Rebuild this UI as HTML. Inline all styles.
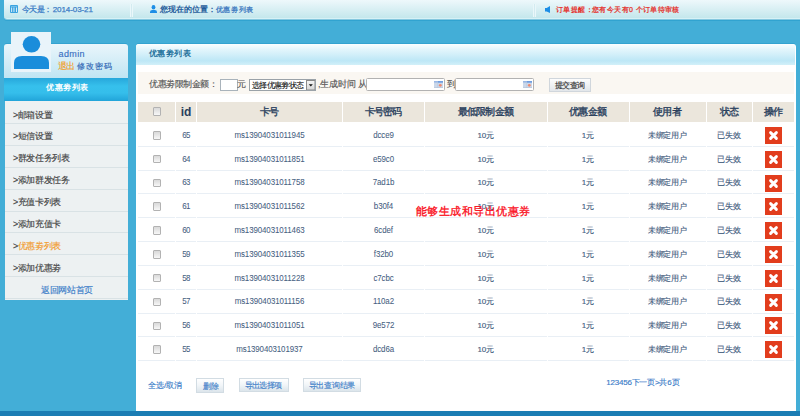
<!DOCTYPE html>
<html><head><meta charset="utf-8">
<style>
*{margin:0;padding:0;box-sizing:border-box}
html,body{width:800px;height:416px;overflow:hidden}
body{background:#43aed7;font-family:"Liberation Sans",sans-serif;position:relative}
.abs{position:absolute}
.t{position:absolute;white-space:nowrap;line-height:1;transform-origin:0 0;-webkit-text-stroke:0.15px currentColor}
.ct{position:absolute;text-align:center;white-space:nowrap;-webkit-text-stroke:0.15px currentColor}
.ct span{display:inline-block;transform-origin:50% 50%}
#top{left:4px;top:0;width:796px;height:19px;border-radius:0 0 0 3px;background:linear-gradient(#eef8fb,#c4e7ec);border-bottom:1px solid #d6f1f6;box-shadow:0 1px 0 #86c8df,0 2px 0 #31a3d0}
#bstrip{left:0;top:411px;width:800px;height:5px;background:#1b7db4}
.sep{position:absolute;top:4px;width:3px;height:13px;background:#d3ebf0;border-left:1px solid #eaf7fa;border-right:1px solid #eaf7fa}
#user{left:4px;top:44px;width:124px;height:34px;border-radius:3px 3px 0 0;background:linear-gradient(#eaf6fb,#bfe5f3)}
#avatar{left:11px;top:32px;width:40px;height:40px;background:#e9f4fa;overflow:hidden}
#shead{left:4px;top:77.8px;width:124px;height:23px;background:linear-gradient(#27a7db,#36c0ec 35%,#35beeb 65%,#21a4d9)}
#menu{left:5px;top:101.2px;width:123px;height:198.6px;background:#edf1f2}
.ml{position:absolute;left:5px;width:123px;height:1px;background:#d9e2e5}
#main{left:136px;top:44px;width:659.5px;height:367px;background:#fff;border-radius:3px 3px 0 0}
#mtitle{left:136px;top:44px;width:659px;height:20.6px;border-radius:3px 3px 0 0;background:linear-gradient(#fbfeff,#e4f6fc 25%,#bde7f6 80%,#d2f0f9)}
#filter{left:138px;top:71.8px;width:656px;height:22.4px;background:#faf7f2}
.th{position:absolute;background:#ebe6dc}
.hd{-webkit-text-stroke:0 !important}
.rl{position:absolute;height:1px;background:#e9eff5}
.cb{position:absolute;width:8.5px;height:8.5px;border:1px solid #b2b2b2;border-radius:1px;background:linear-gradient(#d9d9d9,#f7f7f7)}
.btn{position:absolute;border:1px solid #d2dce3;background:linear-gradient(#ffffff,#f1f5f8 50%,#dce5eb)}
.box{position:absolute;border:1px solid #a9b3bb;background:#fff}
</style></head><body>
<div id="top" class="abs"></div>
<div class="sep" style="left:130px"></div>
<div class="sep" style="left:533px"></div>
<svg class="abs" style="left:10px;top:5px" width="8" height="8" viewBox="0 0 8 8"><rect width="8" height="8" rx="1" fill="#3aa3e0"/><rect x="1" y="1.2" width="6" height="0.6" fill="#8fd0f0"/><rect x="1.2" y="2.5" width="0.9" height="4.5" fill="#e8f6fc"/><rect x="3.5" y="2.5" width="0.9" height="4.5" fill="#e8f6fc"/><rect x="6" y="2.5" width="0.9" height="4.5" fill="#e8f6fc"/></svg>
<div class="t" style="left:22px;top:5.55px;font-size:8px;font-weight:normal;color:#3b7cc6;letter-spacing:-0.667px;-webkit-text-stroke:0.25px currentColor">今天是：</div>
<div class="t" style="left:52.75px;top:6.0px;font-size:8px;font-weight:normal;color:#3b7cc6;letter-spacing:-0.083px;-webkit-text-stroke:0.25px currentColor">2014-03-21</div>
<svg class="abs" style="left:150px;top:5px" width="7" height="8" viewBox="0 0 7 8"><ellipse cx="3.5" cy="2.3" rx="1.9" ry="2.3" fill="#1d8ee6"/><path d="M0 8 V6.9 Q0 5.4 2.3 5.1 H4.7 Q7 5.4 7 6.9 V8Z" fill="#1d8ee6"/></svg>
<div class="t" style="left:159.5px;top:6.0px;font-size:8px;font-weight:bold;color:#1f5c9b;letter-spacing:0.033px;-webkit-text-stroke:0;">您现在的位置：</div>
<div class="t" style="left:215.7px;top:5.5px;font-size:7px;font-weight:normal;color:#3b78c0;letter-spacing:0.675px;-webkit-text-stroke:0.25px currentColor">优惠劵列表</div>
<svg class="abs" style="left:545px;top:6px" width="5" height="7" viewBox="0 0 5 7"><path d="M0 1.9H1.7L5 0V7L1.7 5.6H0Z" fill="#1d8ee6"/></svg>
<div class="t" style="left:555.6px;top:5.5px;font-size:7px;font-weight:bold;color:#e4312b;letter-spacing:0.6px;-webkit-text-stroke:0;">订单提醒：</div>
<div class="t" style="left:592px;top:5.5px;font-size:7px;font-weight:normal;color:#e4312b;letter-spacing:0.383px;-webkit-text-stroke:0.25px currentColor">您有今天有0 个订单待审核</div>

<div class="abs" style="left:5px;top:42.5px;width:122px;height:1.5px;background:#34a3d0;border-radius:2px 2px 0 0"></div>
<div id="user" class="abs"></div>
<div id="avatar" class="abs"><svg width="40" height="40" viewBox="0 0 40 40"><ellipse cx="20.5" cy="12.3" rx="8.8" ry="8.3" fill="#1a8ddb"/><path d="M3 37 V31 Q3 24 11 24 H30 Q38 24 38 31 V37Z" fill="#1a8ddb"/></svg></div>
<div class="t" style="left:58.6px;top:49.65px;font-size:9px;font-weight:normal;color:#3a6fc2;letter-spacing:0.35px;">admin</div>
<div class="t" style="left:57.6px;top:62.05px;font-size:9px;font-weight:normal;color:#f39c1f;letter-spacing:-0.3px;">退出</div>
<div class="t" style="left:77.2px;top:62.55px;font-size:8px;font-weight:normal;color:#3066b4;letter-spacing:0.867px;">修改密码</div>
<div id="shead" class="abs"></div>
<div class="t" style="left:46px;top:84.45px;font-size:8px;font-weight:bold;color:#ffffff;letter-spacing:0.5px;-webkit-text-stroke:0;">优惠劵列表</div>
<div id="menu" class="abs"></div>
<div class="ml" style="top:122.9px"></div>
<div class="ml" style="top:144.8px"></div>
<div class="ml" style="top:166.7px"></div>
<div class="ml" style="top:188.6px"></div>
<div class="ml" style="top:210.5px"></div>
<div class="ml" style="top:232.4px"></div>
<div class="ml" style="top:254.3px"></div>
<div class="ml" style="top:276.2px"></div>
<div class="ml" style="top:298.1px"></div>
<div class="t" style="left:12.9px;top:110.55px;font-size:9px;color:#444;letter-spacing:-0.375px">&gt;邮箱设置</div>
<div class="t" style="left:12.9px;top:132.45px;font-size:9px;color:#444;letter-spacing:-0.375px">&gt;短信设置</div>
<div class="t" style="left:12.9px;top:154.35px;font-size:9px;color:#444;letter-spacing:-0.375px">&gt;群发任务列表</div>
<div class="t" style="left:12.9px;top:176.25px;font-size:9px;color:#444;letter-spacing:-0.375px">&gt;添加群发任务</div>
<div class="t" style="left:12.9px;top:198.15px;font-size:9px;color:#444;letter-spacing:-0.375px">&gt;充值卡列表</div>
<div class="t" style="left:12.9px;top:220.05px;font-size:9px;color:#444;letter-spacing:-0.375px">&gt;添加充值卡</div>
<div class="t" style="left:12.9px;top:241.95px;font-size:9px;color:#444;letter-spacing:-0.375px">&gt;<span style="color:#f29b2e">优惠劵列表</span></div>
<div class="t" style="left:12.9px;top:263.85px;font-size:9px;color:#444;letter-spacing:-0.375px">&gt;添加优惠劵</div>
<div class="t" style="left:5px;width:124px;text-align:center;top:285.75px;font-size:9px;color:#3a7cc8;letter-spacing:-0.375px">返回网站首页</div>

<div class="abs" style="left:137px;top:42.5px;width:658px;height:1.5px;background:#34a3d0;border-radius:2px 2px 0 0"></div>
<div id="main" class="abs"></div>
<div id="mtitle" class="abs"></div>
<div class="t" style="left:148.5px;top:50.15px;font-size:8px;font-weight:bold;color:#22709a;letter-spacing:0.625px;-webkit-text-stroke:0;">优惠劵列表</div>
<div id="filter" class="abs"></div>
<div class="t" style="left:149.4px;top:80.15px;font-size:9px;font-weight:normal;color:#555555;letter-spacing:-0.486px;">优惠劵限制金额：</div>
<div class="box" style="left:219.5px;top:79px;width:18.5px;height:11.7px"></div>
<div class="t" style="left:237px;top:79.8px;font-size:9px;font-weight:normal;color:#555555;letter-spacing:0.9px;">元</div>
<div class="box" style="left:249px;top:79px;width:67px;height:11.5px;border-color:#9aa2a8"></div>
<div class="t" style="left:251.9px;top:81.5px;font-size:8px;font-weight:normal;color:#222222;letter-spacing:-0.65px;-webkit-text-stroke:0.1px currentColor;color:#111">选择优惠劵状态</div>
<svg class="abs" style="left:305.5px;top:79.5px" width="9.5" height="10.5" viewBox="0 0 9.5 10.5"><defs><linearGradient id="g1" x1="0" y1="0" x2="0" y2="1"><stop offset="0" stop-color="#f6f6f6"/><stop offset="1" stop-color="#d6d6d6"/></linearGradient></defs><rect x="0.5" y="0.5" width="8.5" height="9.5" fill="url(#g1)" stroke="#8a8a8a"/><path d="M2.8 4.3H6.8L4.8 6.6Z" fill="#111"/></svg>
<div class="t" style="left:317.9px;top:80.0px;font-size:9px;font-weight:normal;color:#555555;letter-spacing:-0.167px;">,生成时间 从</div>
<div class="box" style="left:366.2px;top:78.3px;width:78.5px;height:12.3px;border-color:#b2b2b2;border-radius:1.5px"></div>
<svg class="abs" style="left:434px;top:80.6px" width="9" height="7.4" viewBox="0 0 9 7.4"><rect width="9" height="7.4" rx="0.6" fill="#cbd8ea"/><rect x="0" y="0" width="9" height="1.6" fill="#9ab8e4"/><rect x="4" y="0" width="5" height="1.6" fill="#6f9ee0"/><rect x="3.6" y="1.6" width="0.5" height="5" fill="#b3c4dc"/><rect x="0" y="6.7" width="9" height="0.7" fill="#9db1cc"/><circle cx="6.3" cy="4.3" r="1.4" fill="#ef8a6e"/></svg>
<div class="t" style="left:446.8px;top:79.8px;font-size:9px;font-weight:normal;color:#555555;letter-spacing:-1.0px;">到</div>
<div class="box" style="left:455.2px;top:78.3px;width:78.5px;height:12.3px;border-color:#b2b2b2;border-radius:1.5px"></div>
<svg class="abs" style="left:523.2px;top:80.6px" width="9" height="7.4" viewBox="0 0 9 7.4"><rect width="9" height="7.4" rx="0.6" fill="#cbd8ea"/><rect x="0" y="0" width="9" height="1.6" fill="#9ab8e4"/><rect x="4" y="0" width="5" height="1.6" fill="#6f9ee0"/><rect x="3.6" y="1.6" width="0.5" height="5" fill="#b3c4dc"/><rect x="0" y="6.7" width="9" height="0.7" fill="#9db1cc"/><circle cx="6.3" cy="4.3" r="1.4" fill="#ef8a6e"/></svg>
<div class="btn" style="left:548.8px;top:77.5px;width:42.2px;height:14.1px;border-color:#d0d6dc;background:linear-gradient(#fdfdfd,#e2e6ea)"></div>
<div class="t" style="left:555px;top:81.6px;font-size:8px;font-weight:normal;color:#333333;letter-spacing:-0.533px;">提交查询</div>
<div class="th" style="left:138px;width:37px;top:102px;height:20px"></div>
<div class="th" style="left:176px;width:20px;top:102px;height:20px"></div>
<div class="th" style="left:197px;width:145px;top:102px;height:20px"></div>
<div class="th" style="left:343px;width:81px;top:102px;height:20px"></div>
<div class="th" style="left:425px;width:121.5px;top:102px;height:20px"></div>
<div class="th" style="left:547.5px;width:81.0px;top:102px;height:20px"></div>
<div class="th" style="left:629.5px;width:76.0px;top:102px;height:20px"></div>
<div class="th" style="left:706.5px;width:45.5px;top:102px;height:20px"></div>
<div class="th" style="left:753px;width:41px;top:102px;height:20px"></div>
<div class="cb" style="left:152.8px;top:107.4px"></div>
<div class="ct" style="left:176.0px;width:20px;top:101.7px;height:20px;line-height:20px;font-size:12px;font-weight:bold;color:#2a3f5d;letter-spacing:0px;-webkit-text-stroke:0">id</div>
<div class="ct" style="left:196.6px;width:145px;top:102.0px;height:20px;line-height:20px;font-size:10px;font-weight:normal;color:#2a3f5d;letter-spacing:-0.8px;-webkit-text-stroke:0.35px currentColor">卡号</div>
<div class="ct" style="left:342.6px;width:81px;top:102.0px;height:20px;line-height:20px;font-size:10px;font-weight:normal;color:#2a3f5d;letter-spacing:-0.8px;-webkit-text-stroke:0.35px currentColor">卡号密码</div>
<div class="ct" style="left:424.6px;width:121.5px;top:102.0px;height:20px;line-height:20px;font-size:10px;font-weight:normal;color:#2a3f5d;letter-spacing:-0.8px;-webkit-text-stroke:0.35px currentColor">最低限制金额</div>
<div class="ct" style="left:547.1px;width:81.0px;top:102.0px;height:20px;line-height:20px;font-size:10px;font-weight:normal;color:#2a3f5d;letter-spacing:-0.8px;-webkit-text-stroke:0.35px currentColor">优惠金额</div>
<div class="ct" style="left:629.1px;width:76.0px;top:102.0px;height:20px;line-height:20px;font-size:10px;font-weight:normal;color:#2a3f5d;letter-spacing:-0.8px;-webkit-text-stroke:0.35px currentColor">使用者</div>
<div class="ct" style="left:706.1px;width:45.5px;top:102.0px;height:20px;line-height:20px;font-size:10px;font-weight:normal;color:#2a3f5d;letter-spacing:-0.8px;-webkit-text-stroke:0.35px currentColor">状态</div>
<div class="ct" style="left:752.6px;width:41px;top:102.0px;height:20px;line-height:20px;font-size:10px;font-weight:normal;color:#2a3f5d;letter-spacing:-0.8px;-webkit-text-stroke:0.35px currentColor">操作</div>
<div class="rl" style="left:138px;width:37px;top:145.82px"></div>
<div class="rl" style="left:176px;width:20px;top:145.82px"></div>
<div class="rl" style="left:197px;width:145px;top:145.82px"></div>
<div class="rl" style="left:343px;width:81px;top:145.82px"></div>
<div class="rl" style="left:425px;width:121.5px;top:145.82px"></div>
<div class="rl" style="left:547.5px;width:81.0px;top:145.82px"></div>
<div class="rl" style="left:629.5px;width:76.0px;top:145.82px"></div>
<div class="rl" style="left:706.5px;width:45.5px;top:145.82px"></div>
<div class="rl" style="left:753px;width:41px;top:145.82px"></div>
<div class="cb" style="left:152.8px;top:131.01px"></div>
<div class="ct" style="left:175.7px;width:20px;top:123.7px;height:23.82px;line-height:23.82px;font-size:8px;font-weight:normal;color:#46607f;letter-spacing:-0.6px;transform:scale(0.99,1.14);-webkit-text-stroke:0.05px currentColor">65</div>
<div class="ct" style="left:196.95px;width:145px;top:123.7px;height:23.82px;line-height:23.82px;font-size:8px;font-weight:normal;color:#46607f;letter-spacing:-0.1px;transform:scale(0.99,1.14);-webkit-text-stroke:0.05px currentColor">ms13904031011945</div>
<div class="ct" style="left:342.95px;width:81px;top:123.7px;height:23.82px;line-height:23.82px;font-size:8px;font-weight:normal;color:#46607f;letter-spacing:-0.1px;transform:scale(0.99,1.14);-webkit-text-stroke:0.05px currentColor">dcce9</div>
<div class="ct" style="left:424.95px;width:121.5px;top:123.7px;height:23.82px;line-height:23.82px;font-size:8px;font-weight:normal;color:#46607f;letter-spacing:-0.1px">10元</div>
<div class="ct" style="left:547.45px;width:81.0px;top:123.7px;height:23.82px;line-height:23.82px;font-size:8px;font-weight:normal;color:#46607f;letter-spacing:-0.1px">1元</div>
<div class="ct" style="left:629.45px;width:76.0px;top:123.7px;height:23.82px;line-height:23.82px;font-size:8px;font-weight:normal;color:#46607f;letter-spacing:-0.1px">未绑定用户</div>
<div class="ct" style="left:706.45px;width:45.5px;top:123.7px;height:23.82px;line-height:23.82px;font-size:8px;font-weight:normal;color:#46607f;letter-spacing:-0.1px">已失效</div>
<svg class="abs" style="left:765px;top:126.91px" width="17" height="17" viewBox="0 0 17 17"><rect width="17" height="17" fill="#e23d1d"/><path d="M5.6 5.6L11.4 11.4M11.4 5.6L5.6 11.4" stroke="#fff" stroke-width="2.9" stroke-linecap="round"/></svg>
<div class="rl" style="left:138px;width:37px;top:169.64px"></div>
<div class="rl" style="left:176px;width:20px;top:169.64px"></div>
<div class="rl" style="left:197px;width:145px;top:169.64px"></div>
<div class="rl" style="left:343px;width:81px;top:169.64px"></div>
<div class="rl" style="left:425px;width:121.5px;top:169.64px"></div>
<div class="rl" style="left:547.5px;width:81.0px;top:169.64px"></div>
<div class="rl" style="left:629.5px;width:76.0px;top:169.64px"></div>
<div class="rl" style="left:706.5px;width:45.5px;top:169.64px"></div>
<div class="rl" style="left:753px;width:41px;top:169.64px"></div>
<div class="cb" style="left:152.8px;top:154.83px"></div>
<div class="ct" style="left:175.7px;width:20px;top:147.52px;height:23.82px;line-height:23.82px;font-size:8px;font-weight:normal;color:#46607f;letter-spacing:-0.6px;transform:scale(0.99,1.14);-webkit-text-stroke:0.05px currentColor">64</div>
<div class="ct" style="left:196.95px;width:145px;top:147.52px;height:23.82px;line-height:23.82px;font-size:8px;font-weight:normal;color:#46607f;letter-spacing:-0.1px;transform:scale(0.99,1.14);-webkit-text-stroke:0.05px currentColor">ms13904031011851</div>
<div class="ct" style="left:342.95px;width:81px;top:147.52px;height:23.82px;line-height:23.82px;font-size:8px;font-weight:normal;color:#46607f;letter-spacing:-0.1px;transform:scale(0.99,1.14);-webkit-text-stroke:0.05px currentColor">e59c0</div>
<div class="ct" style="left:424.95px;width:121.5px;top:147.52px;height:23.82px;line-height:23.82px;font-size:8px;font-weight:normal;color:#46607f;letter-spacing:-0.1px">10元</div>
<div class="ct" style="left:547.45px;width:81.0px;top:147.52px;height:23.82px;line-height:23.82px;font-size:8px;font-weight:normal;color:#46607f;letter-spacing:-0.1px">1元</div>
<div class="ct" style="left:629.45px;width:76.0px;top:147.52px;height:23.82px;line-height:23.82px;font-size:8px;font-weight:normal;color:#46607f;letter-spacing:-0.1px">未绑定用户</div>
<div class="ct" style="left:706.45px;width:45.5px;top:147.52px;height:23.82px;line-height:23.82px;font-size:8px;font-weight:normal;color:#46607f;letter-spacing:-0.1px">已失效</div>
<svg class="abs" style="left:765px;top:150.73px" width="17" height="17" viewBox="0 0 17 17"><rect width="17" height="17" fill="#e23d1d"/><path d="M5.6 5.6L11.4 11.4M11.4 5.6L5.6 11.4" stroke="#fff" stroke-width="2.9" stroke-linecap="round"/></svg>
<div class="rl" style="left:138px;width:37px;top:193.46px"></div>
<div class="rl" style="left:176px;width:20px;top:193.46px"></div>
<div class="rl" style="left:197px;width:145px;top:193.46px"></div>
<div class="rl" style="left:343px;width:81px;top:193.46px"></div>
<div class="rl" style="left:425px;width:121.5px;top:193.46px"></div>
<div class="rl" style="left:547.5px;width:81.0px;top:193.46px"></div>
<div class="rl" style="left:629.5px;width:76.0px;top:193.46px"></div>
<div class="rl" style="left:706.5px;width:45.5px;top:193.46px"></div>
<div class="rl" style="left:753px;width:41px;top:193.46px"></div>
<div class="cb" style="left:152.8px;top:178.65px"></div>
<div class="ct" style="left:175.7px;width:20px;top:171.34px;height:23.82px;line-height:23.82px;font-size:8px;font-weight:normal;color:#46607f;letter-spacing:-0.6px;transform:scale(0.99,1.14);-webkit-text-stroke:0.05px currentColor">63</div>
<div class="ct" style="left:196.95px;width:145px;top:171.34px;height:23.82px;line-height:23.82px;font-size:8px;font-weight:normal;color:#46607f;letter-spacing:-0.1px;transform:scale(0.99,1.14);-webkit-text-stroke:0.05px currentColor">ms13904031011758</div>
<div class="ct" style="left:342.95px;width:81px;top:171.34px;height:23.82px;line-height:23.82px;font-size:8px;font-weight:normal;color:#46607f;letter-spacing:-0.1px;transform:scale(0.99,1.14);-webkit-text-stroke:0.05px currentColor">7ad1b</div>
<div class="ct" style="left:424.95px;width:121.5px;top:171.34px;height:23.82px;line-height:23.82px;font-size:8px;font-weight:normal;color:#46607f;letter-spacing:-0.1px">10元</div>
<div class="ct" style="left:547.45px;width:81.0px;top:171.34px;height:23.82px;line-height:23.82px;font-size:8px;font-weight:normal;color:#46607f;letter-spacing:-0.1px">1元</div>
<div class="ct" style="left:629.45px;width:76.0px;top:171.34px;height:23.82px;line-height:23.82px;font-size:8px;font-weight:normal;color:#46607f;letter-spacing:-0.1px">未绑定用户</div>
<div class="ct" style="left:706.45px;width:45.5px;top:171.34px;height:23.82px;line-height:23.82px;font-size:8px;font-weight:normal;color:#46607f;letter-spacing:-0.1px">已失效</div>
<svg class="abs" style="left:765px;top:174.55px" width="17" height="17" viewBox="0 0 17 17"><rect width="17" height="17" fill="#e23d1d"/><path d="M5.6 5.6L11.4 11.4M11.4 5.6L5.6 11.4" stroke="#fff" stroke-width="2.9" stroke-linecap="round"/></svg>
<div class="rl" style="left:138px;width:37px;top:217.28px"></div>
<div class="rl" style="left:176px;width:20px;top:217.28px"></div>
<div class="rl" style="left:197px;width:145px;top:217.28px"></div>
<div class="rl" style="left:343px;width:81px;top:217.28px"></div>
<div class="rl" style="left:425px;width:121.5px;top:217.28px"></div>
<div class="rl" style="left:547.5px;width:81.0px;top:217.28px"></div>
<div class="rl" style="left:629.5px;width:76.0px;top:217.28px"></div>
<div class="rl" style="left:706.5px;width:45.5px;top:217.28px"></div>
<div class="rl" style="left:753px;width:41px;top:217.28px"></div>
<div class="cb" style="left:152.8px;top:202.47px"></div>
<div class="ct" style="left:175.7px;width:20px;top:195.16px;height:23.82px;line-height:23.82px;font-size:8px;font-weight:normal;color:#46607f;letter-spacing:-0.6px;transform:scale(0.99,1.14);-webkit-text-stroke:0.05px currentColor">61</div>
<div class="ct" style="left:196.95px;width:145px;top:195.16px;height:23.82px;line-height:23.82px;font-size:8px;font-weight:normal;color:#46607f;letter-spacing:-0.1px;transform:scale(0.99,1.14);-webkit-text-stroke:0.05px currentColor">ms13904031011562</div>
<div class="ct" style="left:342.95px;width:81px;top:195.16px;height:23.82px;line-height:23.82px;font-size:8px;font-weight:normal;color:#46607f;letter-spacing:-0.1px;transform:scale(0.99,1.14);-webkit-text-stroke:0.05px currentColor">b30f4</div>
<div class="ct" style="left:424.95px;width:121.5px;top:195.16px;height:23.82px;line-height:23.82px;font-size:8px;font-weight:normal;color:#46607f;letter-spacing:-0.1px">10元</div>
<div class="ct" style="left:547.45px;width:81.0px;top:195.16px;height:23.82px;line-height:23.82px;font-size:8px;font-weight:normal;color:#46607f;letter-spacing:-0.1px">1元</div>
<div class="ct" style="left:629.45px;width:76.0px;top:195.16px;height:23.82px;line-height:23.82px;font-size:8px;font-weight:normal;color:#46607f;letter-spacing:-0.1px">未绑定用户</div>
<div class="ct" style="left:706.45px;width:45.5px;top:195.16px;height:23.82px;line-height:23.82px;font-size:8px;font-weight:normal;color:#46607f;letter-spacing:-0.1px">已失效</div>
<svg class="abs" style="left:765px;top:198.37px" width="17" height="17" viewBox="0 0 17 17"><rect width="17" height="17" fill="#e23d1d"/><path d="M5.6 5.6L11.4 11.4M11.4 5.6L5.6 11.4" stroke="#fff" stroke-width="2.9" stroke-linecap="round"/></svg>
<div class="rl" style="left:138px;width:37px;top:241.1px"></div>
<div class="rl" style="left:176px;width:20px;top:241.1px"></div>
<div class="rl" style="left:197px;width:145px;top:241.1px"></div>
<div class="rl" style="left:343px;width:81px;top:241.1px"></div>
<div class="rl" style="left:425px;width:121.5px;top:241.1px"></div>
<div class="rl" style="left:547.5px;width:81.0px;top:241.1px"></div>
<div class="rl" style="left:629.5px;width:76.0px;top:241.1px"></div>
<div class="rl" style="left:706.5px;width:45.5px;top:241.1px"></div>
<div class="rl" style="left:753px;width:41px;top:241.1px"></div>
<div class="cb" style="left:152.8px;top:226.29px"></div>
<div class="ct" style="left:175.7px;width:20px;top:218.98px;height:23.82px;line-height:23.82px;font-size:8px;font-weight:normal;color:#46607f;letter-spacing:-0.6px;transform:scale(0.99,1.14);-webkit-text-stroke:0.05px currentColor">60</div>
<div class="ct" style="left:196.95px;width:145px;top:218.98px;height:23.82px;line-height:23.82px;font-size:8px;font-weight:normal;color:#46607f;letter-spacing:-0.1px;transform:scale(0.99,1.14);-webkit-text-stroke:0.05px currentColor">ms13904031011463</div>
<div class="ct" style="left:342.95px;width:81px;top:218.98px;height:23.82px;line-height:23.82px;font-size:8px;font-weight:normal;color:#46607f;letter-spacing:-0.1px;transform:scale(0.99,1.14);-webkit-text-stroke:0.05px currentColor">6cdef</div>
<div class="ct" style="left:424.95px;width:121.5px;top:218.98px;height:23.82px;line-height:23.82px;font-size:8px;font-weight:normal;color:#46607f;letter-spacing:-0.1px">10元</div>
<div class="ct" style="left:547.45px;width:81.0px;top:218.98px;height:23.82px;line-height:23.82px;font-size:8px;font-weight:normal;color:#46607f;letter-spacing:-0.1px">1元</div>
<div class="ct" style="left:629.45px;width:76.0px;top:218.98px;height:23.82px;line-height:23.82px;font-size:8px;font-weight:normal;color:#46607f;letter-spacing:-0.1px">未绑定用户</div>
<div class="ct" style="left:706.45px;width:45.5px;top:218.98px;height:23.82px;line-height:23.82px;font-size:8px;font-weight:normal;color:#46607f;letter-spacing:-0.1px">已失效</div>
<svg class="abs" style="left:765px;top:222.19px" width="17" height="17" viewBox="0 0 17 17"><rect width="17" height="17" fill="#e23d1d"/><path d="M5.6 5.6L11.4 11.4M11.4 5.6L5.6 11.4" stroke="#fff" stroke-width="2.9" stroke-linecap="round"/></svg>
<div class="rl" style="left:138px;width:37px;top:264.92px"></div>
<div class="rl" style="left:176px;width:20px;top:264.92px"></div>
<div class="rl" style="left:197px;width:145px;top:264.92px"></div>
<div class="rl" style="left:343px;width:81px;top:264.92px"></div>
<div class="rl" style="left:425px;width:121.5px;top:264.92px"></div>
<div class="rl" style="left:547.5px;width:81.0px;top:264.92px"></div>
<div class="rl" style="left:629.5px;width:76.0px;top:264.92px"></div>
<div class="rl" style="left:706.5px;width:45.5px;top:264.92px"></div>
<div class="rl" style="left:753px;width:41px;top:264.92px"></div>
<div class="cb" style="left:152.8px;top:250.11px"></div>
<div class="ct" style="left:175.7px;width:20px;top:242.8px;height:23.82px;line-height:23.82px;font-size:8px;font-weight:normal;color:#46607f;letter-spacing:-0.6px;transform:scale(0.99,1.14);-webkit-text-stroke:0.05px currentColor">59</div>
<div class="ct" style="left:196.95px;width:145px;top:242.8px;height:23.82px;line-height:23.82px;font-size:8px;font-weight:normal;color:#46607f;letter-spacing:-0.1px;transform:scale(0.99,1.14);-webkit-text-stroke:0.05px currentColor">ms13904031011355</div>
<div class="ct" style="left:342.95px;width:81px;top:242.8px;height:23.82px;line-height:23.82px;font-size:8px;font-weight:normal;color:#46607f;letter-spacing:-0.1px;transform:scale(0.99,1.14);-webkit-text-stroke:0.05px currentColor">f32b0</div>
<div class="ct" style="left:424.95px;width:121.5px;top:242.8px;height:23.82px;line-height:23.82px;font-size:8px;font-weight:normal;color:#46607f;letter-spacing:-0.1px">10元</div>
<div class="ct" style="left:547.45px;width:81.0px;top:242.8px;height:23.82px;line-height:23.82px;font-size:8px;font-weight:normal;color:#46607f;letter-spacing:-0.1px">1元</div>
<div class="ct" style="left:629.45px;width:76.0px;top:242.8px;height:23.82px;line-height:23.82px;font-size:8px;font-weight:normal;color:#46607f;letter-spacing:-0.1px">未绑定用户</div>
<div class="ct" style="left:706.45px;width:45.5px;top:242.8px;height:23.82px;line-height:23.82px;font-size:8px;font-weight:normal;color:#46607f;letter-spacing:-0.1px">已失效</div>
<svg class="abs" style="left:765px;top:246.01px" width="17" height="17" viewBox="0 0 17 17"><rect width="17" height="17" fill="#e23d1d"/><path d="M5.6 5.6L11.4 11.4M11.4 5.6L5.6 11.4" stroke="#fff" stroke-width="2.9" stroke-linecap="round"/></svg>
<div class="rl" style="left:138px;width:37px;top:288.74px"></div>
<div class="rl" style="left:176px;width:20px;top:288.74px"></div>
<div class="rl" style="left:197px;width:145px;top:288.74px"></div>
<div class="rl" style="left:343px;width:81px;top:288.74px"></div>
<div class="rl" style="left:425px;width:121.5px;top:288.74px"></div>
<div class="rl" style="left:547.5px;width:81.0px;top:288.74px"></div>
<div class="rl" style="left:629.5px;width:76.0px;top:288.74px"></div>
<div class="rl" style="left:706.5px;width:45.5px;top:288.74px"></div>
<div class="rl" style="left:753px;width:41px;top:288.74px"></div>
<div class="cb" style="left:152.8px;top:273.93px"></div>
<div class="ct" style="left:175.7px;width:20px;top:266.62px;height:23.82px;line-height:23.82px;font-size:8px;font-weight:normal;color:#46607f;letter-spacing:-0.6px;transform:scale(0.99,1.14);-webkit-text-stroke:0.05px currentColor">58</div>
<div class="ct" style="left:196.95px;width:145px;top:266.62px;height:23.82px;line-height:23.82px;font-size:8px;font-weight:normal;color:#46607f;letter-spacing:-0.1px;transform:scale(0.99,1.14);-webkit-text-stroke:0.05px currentColor">ms13904031011228</div>
<div class="ct" style="left:342.95px;width:81px;top:266.62px;height:23.82px;line-height:23.82px;font-size:8px;font-weight:normal;color:#46607f;letter-spacing:-0.1px;transform:scale(0.99,1.14);-webkit-text-stroke:0.05px currentColor">c7cbc</div>
<div class="ct" style="left:424.95px;width:121.5px;top:266.62px;height:23.82px;line-height:23.82px;font-size:8px;font-weight:normal;color:#46607f;letter-spacing:-0.1px">10元</div>
<div class="ct" style="left:547.45px;width:81.0px;top:266.62px;height:23.82px;line-height:23.82px;font-size:8px;font-weight:normal;color:#46607f;letter-spacing:-0.1px">1元</div>
<div class="ct" style="left:629.45px;width:76.0px;top:266.62px;height:23.82px;line-height:23.82px;font-size:8px;font-weight:normal;color:#46607f;letter-spacing:-0.1px">未绑定用户</div>
<div class="ct" style="left:706.45px;width:45.5px;top:266.62px;height:23.82px;line-height:23.82px;font-size:8px;font-weight:normal;color:#46607f;letter-spacing:-0.1px">已失效</div>
<svg class="abs" style="left:765px;top:269.83px" width="17" height="17" viewBox="0 0 17 17"><rect width="17" height="17" fill="#e23d1d"/><path d="M5.6 5.6L11.4 11.4M11.4 5.6L5.6 11.4" stroke="#fff" stroke-width="2.9" stroke-linecap="round"/></svg>
<div class="rl" style="left:138px;width:37px;top:312.56px"></div>
<div class="rl" style="left:176px;width:20px;top:312.56px"></div>
<div class="rl" style="left:197px;width:145px;top:312.56px"></div>
<div class="rl" style="left:343px;width:81px;top:312.56px"></div>
<div class="rl" style="left:425px;width:121.5px;top:312.56px"></div>
<div class="rl" style="left:547.5px;width:81.0px;top:312.56px"></div>
<div class="rl" style="left:629.5px;width:76.0px;top:312.56px"></div>
<div class="rl" style="left:706.5px;width:45.5px;top:312.56px"></div>
<div class="rl" style="left:753px;width:41px;top:312.56px"></div>
<div class="cb" style="left:152.8px;top:297.75px"></div>
<div class="ct" style="left:175.7px;width:20px;top:290.44px;height:23.82px;line-height:23.82px;font-size:8px;font-weight:normal;color:#46607f;letter-spacing:-0.6px;transform:scale(0.99,1.14);-webkit-text-stroke:0.05px currentColor">57</div>
<div class="ct" style="left:196.95px;width:145px;top:290.44px;height:23.82px;line-height:23.82px;font-size:8px;font-weight:normal;color:#46607f;letter-spacing:-0.1px;transform:scale(0.99,1.14);-webkit-text-stroke:0.05px currentColor">ms13904031011156</div>
<div class="ct" style="left:342.95px;width:81px;top:290.44px;height:23.82px;line-height:23.82px;font-size:8px;font-weight:normal;color:#46607f;letter-spacing:-0.1px;transform:scale(0.99,1.14);-webkit-text-stroke:0.05px currentColor">110a2</div>
<div class="ct" style="left:424.95px;width:121.5px;top:290.44px;height:23.82px;line-height:23.82px;font-size:8px;font-weight:normal;color:#46607f;letter-spacing:-0.1px">10元</div>
<div class="ct" style="left:547.45px;width:81.0px;top:290.44px;height:23.82px;line-height:23.82px;font-size:8px;font-weight:normal;color:#46607f;letter-spacing:-0.1px">1元</div>
<div class="ct" style="left:629.45px;width:76.0px;top:290.44px;height:23.82px;line-height:23.82px;font-size:8px;font-weight:normal;color:#46607f;letter-spacing:-0.1px">未绑定用户</div>
<div class="ct" style="left:706.45px;width:45.5px;top:290.44px;height:23.82px;line-height:23.82px;font-size:8px;font-weight:normal;color:#46607f;letter-spacing:-0.1px">已失效</div>
<svg class="abs" style="left:765px;top:293.65px" width="17" height="17" viewBox="0 0 17 17"><rect width="17" height="17" fill="#e23d1d"/><path d="M5.6 5.6L11.4 11.4M11.4 5.6L5.6 11.4" stroke="#fff" stroke-width="2.9" stroke-linecap="round"/></svg>
<div class="rl" style="left:138px;width:37px;top:336.38px"></div>
<div class="rl" style="left:176px;width:20px;top:336.38px"></div>
<div class="rl" style="left:197px;width:145px;top:336.38px"></div>
<div class="rl" style="left:343px;width:81px;top:336.38px"></div>
<div class="rl" style="left:425px;width:121.5px;top:336.38px"></div>
<div class="rl" style="left:547.5px;width:81.0px;top:336.38px"></div>
<div class="rl" style="left:629.5px;width:76.0px;top:336.38px"></div>
<div class="rl" style="left:706.5px;width:45.5px;top:336.38px"></div>
<div class="rl" style="left:753px;width:41px;top:336.38px"></div>
<div class="cb" style="left:152.8px;top:321.57px"></div>
<div class="ct" style="left:175.7px;width:20px;top:314.26px;height:23.82px;line-height:23.82px;font-size:8px;font-weight:normal;color:#46607f;letter-spacing:-0.6px;transform:scale(0.99,1.14);-webkit-text-stroke:0.05px currentColor">56</div>
<div class="ct" style="left:196.95px;width:145px;top:314.26px;height:23.82px;line-height:23.82px;font-size:8px;font-weight:normal;color:#46607f;letter-spacing:-0.1px;transform:scale(0.99,1.14);-webkit-text-stroke:0.05px currentColor">ms13904031011051</div>
<div class="ct" style="left:342.95px;width:81px;top:314.26px;height:23.82px;line-height:23.82px;font-size:8px;font-weight:normal;color:#46607f;letter-spacing:-0.1px;transform:scale(0.99,1.14);-webkit-text-stroke:0.05px currentColor">9e572</div>
<div class="ct" style="left:424.95px;width:121.5px;top:314.26px;height:23.82px;line-height:23.82px;font-size:8px;font-weight:normal;color:#46607f;letter-spacing:-0.1px">10元</div>
<div class="ct" style="left:547.45px;width:81.0px;top:314.26px;height:23.82px;line-height:23.82px;font-size:8px;font-weight:normal;color:#46607f;letter-spacing:-0.1px">1元</div>
<div class="ct" style="left:629.45px;width:76.0px;top:314.26px;height:23.82px;line-height:23.82px;font-size:8px;font-weight:normal;color:#46607f;letter-spacing:-0.1px">未绑定用户</div>
<div class="ct" style="left:706.45px;width:45.5px;top:314.26px;height:23.82px;line-height:23.82px;font-size:8px;font-weight:normal;color:#46607f;letter-spacing:-0.1px">已失效</div>
<svg class="abs" style="left:765px;top:317.47px" width="17" height="17" viewBox="0 0 17 17"><rect width="17" height="17" fill="#e23d1d"/><path d="M5.6 5.6L11.4 11.4M11.4 5.6L5.6 11.4" stroke="#fff" stroke-width="2.9" stroke-linecap="round"/></svg>
<div class="rl" style="left:138px;width:37px;top:360.2px"></div>
<div class="rl" style="left:176px;width:20px;top:360.2px"></div>
<div class="rl" style="left:197px;width:145px;top:360.2px"></div>
<div class="rl" style="left:343px;width:81px;top:360.2px"></div>
<div class="rl" style="left:425px;width:121.5px;top:360.2px"></div>
<div class="rl" style="left:547.5px;width:81.0px;top:360.2px"></div>
<div class="rl" style="left:629.5px;width:76.0px;top:360.2px"></div>
<div class="rl" style="left:706.5px;width:45.5px;top:360.2px"></div>
<div class="rl" style="left:753px;width:41px;top:360.2px"></div>
<div class="cb" style="left:152.8px;top:345.39px"></div>
<div class="ct" style="left:175.7px;width:20px;top:338.08px;height:23.82px;line-height:23.82px;font-size:8px;font-weight:normal;color:#46607f;letter-spacing:-0.6px;transform:scale(0.99,1.14);-webkit-text-stroke:0.05px currentColor">55</div>
<div class="ct" style="left:196.95px;width:145px;top:338.08px;height:23.82px;line-height:23.82px;font-size:8px;font-weight:normal;color:#46607f;letter-spacing:-0.1px;transform:scale(0.99,1.14);-webkit-text-stroke:0.05px currentColor">ms1390403101937</div>
<div class="ct" style="left:342.95px;width:81px;top:338.08px;height:23.82px;line-height:23.82px;font-size:8px;font-weight:normal;color:#46607f;letter-spacing:-0.1px;transform:scale(0.99,1.14);-webkit-text-stroke:0.05px currentColor">dcd6a</div>
<div class="ct" style="left:424.95px;width:121.5px;top:338.08px;height:23.82px;line-height:23.82px;font-size:8px;font-weight:normal;color:#46607f;letter-spacing:-0.1px">10元</div>
<div class="ct" style="left:547.45px;width:81.0px;top:338.08px;height:23.82px;line-height:23.82px;font-size:8px;font-weight:normal;color:#46607f;letter-spacing:-0.1px">1元</div>
<div class="ct" style="left:629.45px;width:76.0px;top:338.08px;height:23.82px;line-height:23.82px;font-size:8px;font-weight:normal;color:#46607f;letter-spacing:-0.1px">未绑定用户</div>
<div class="ct" style="left:706.45px;width:45.5px;top:338.08px;height:23.82px;line-height:23.82px;font-size:8px;font-weight:normal;color:#46607f;letter-spacing:-0.1px">已失效</div>
<svg class="abs" style="left:765px;top:341.29px" width="17" height="17" viewBox="0 0 17 17"><rect width="17" height="17" fill="#e23d1d"/><path d="M5.6 5.6L11.4 11.4M11.4 5.6L5.6 11.4" stroke="#fff" stroke-width="2.9" stroke-linecap="round"/></svg>
<div class="t" style="left:415.75px;top:206.0px;font-size:11px;font-weight:500;color:#fa0d1a;letter-spacing:0.5px;-webkit-text-stroke:0.3px currentColor">能够生成和导出优惠券</div>
<div class="t" style="left:148.3px;top:382.05px;font-size:8px;font-weight:normal;color:#3a7cc8;letter-spacing:-0.175px;">全选/取消</div>
<div class="btn" style="left:196.2px;top:378.3px;width:27.5px;height:14.3px"></div>
<div class="t" style="left:202.9px;top:382.65px;font-size:8px;font-weight:normal;color:#3f7fc8;letter-spacing:-0.3px;">删除</div>
<div class="btn" style="left:238.6px;top:378px;width:50.1px;height:14.2px"></div>
<div class="t" style="left:244.6px;top:381.9px;font-size:8px;font-weight:normal;color:#3f7fc8;letter-spacing:-0.6px;">导出选择项</div>
<div class="btn" style="left:303px;top:378px;width:57.7px;height:14.2px"></div>
<div class="t" style="left:308.8px;top:381.9px;font-size:8px;font-weight:normal;color:#3f7fc8;letter-spacing:-0.32px;">导出查询结果</div>
<div class="t" style="left:606.2px;top:378.55px;font-size:8px;font-weight:normal;color:#3a7cc8;letter-spacing:-0.208px;">123456下一页&gt;共6页</div>
<div id="bstrip" class="abs"></div>
</body></html>
